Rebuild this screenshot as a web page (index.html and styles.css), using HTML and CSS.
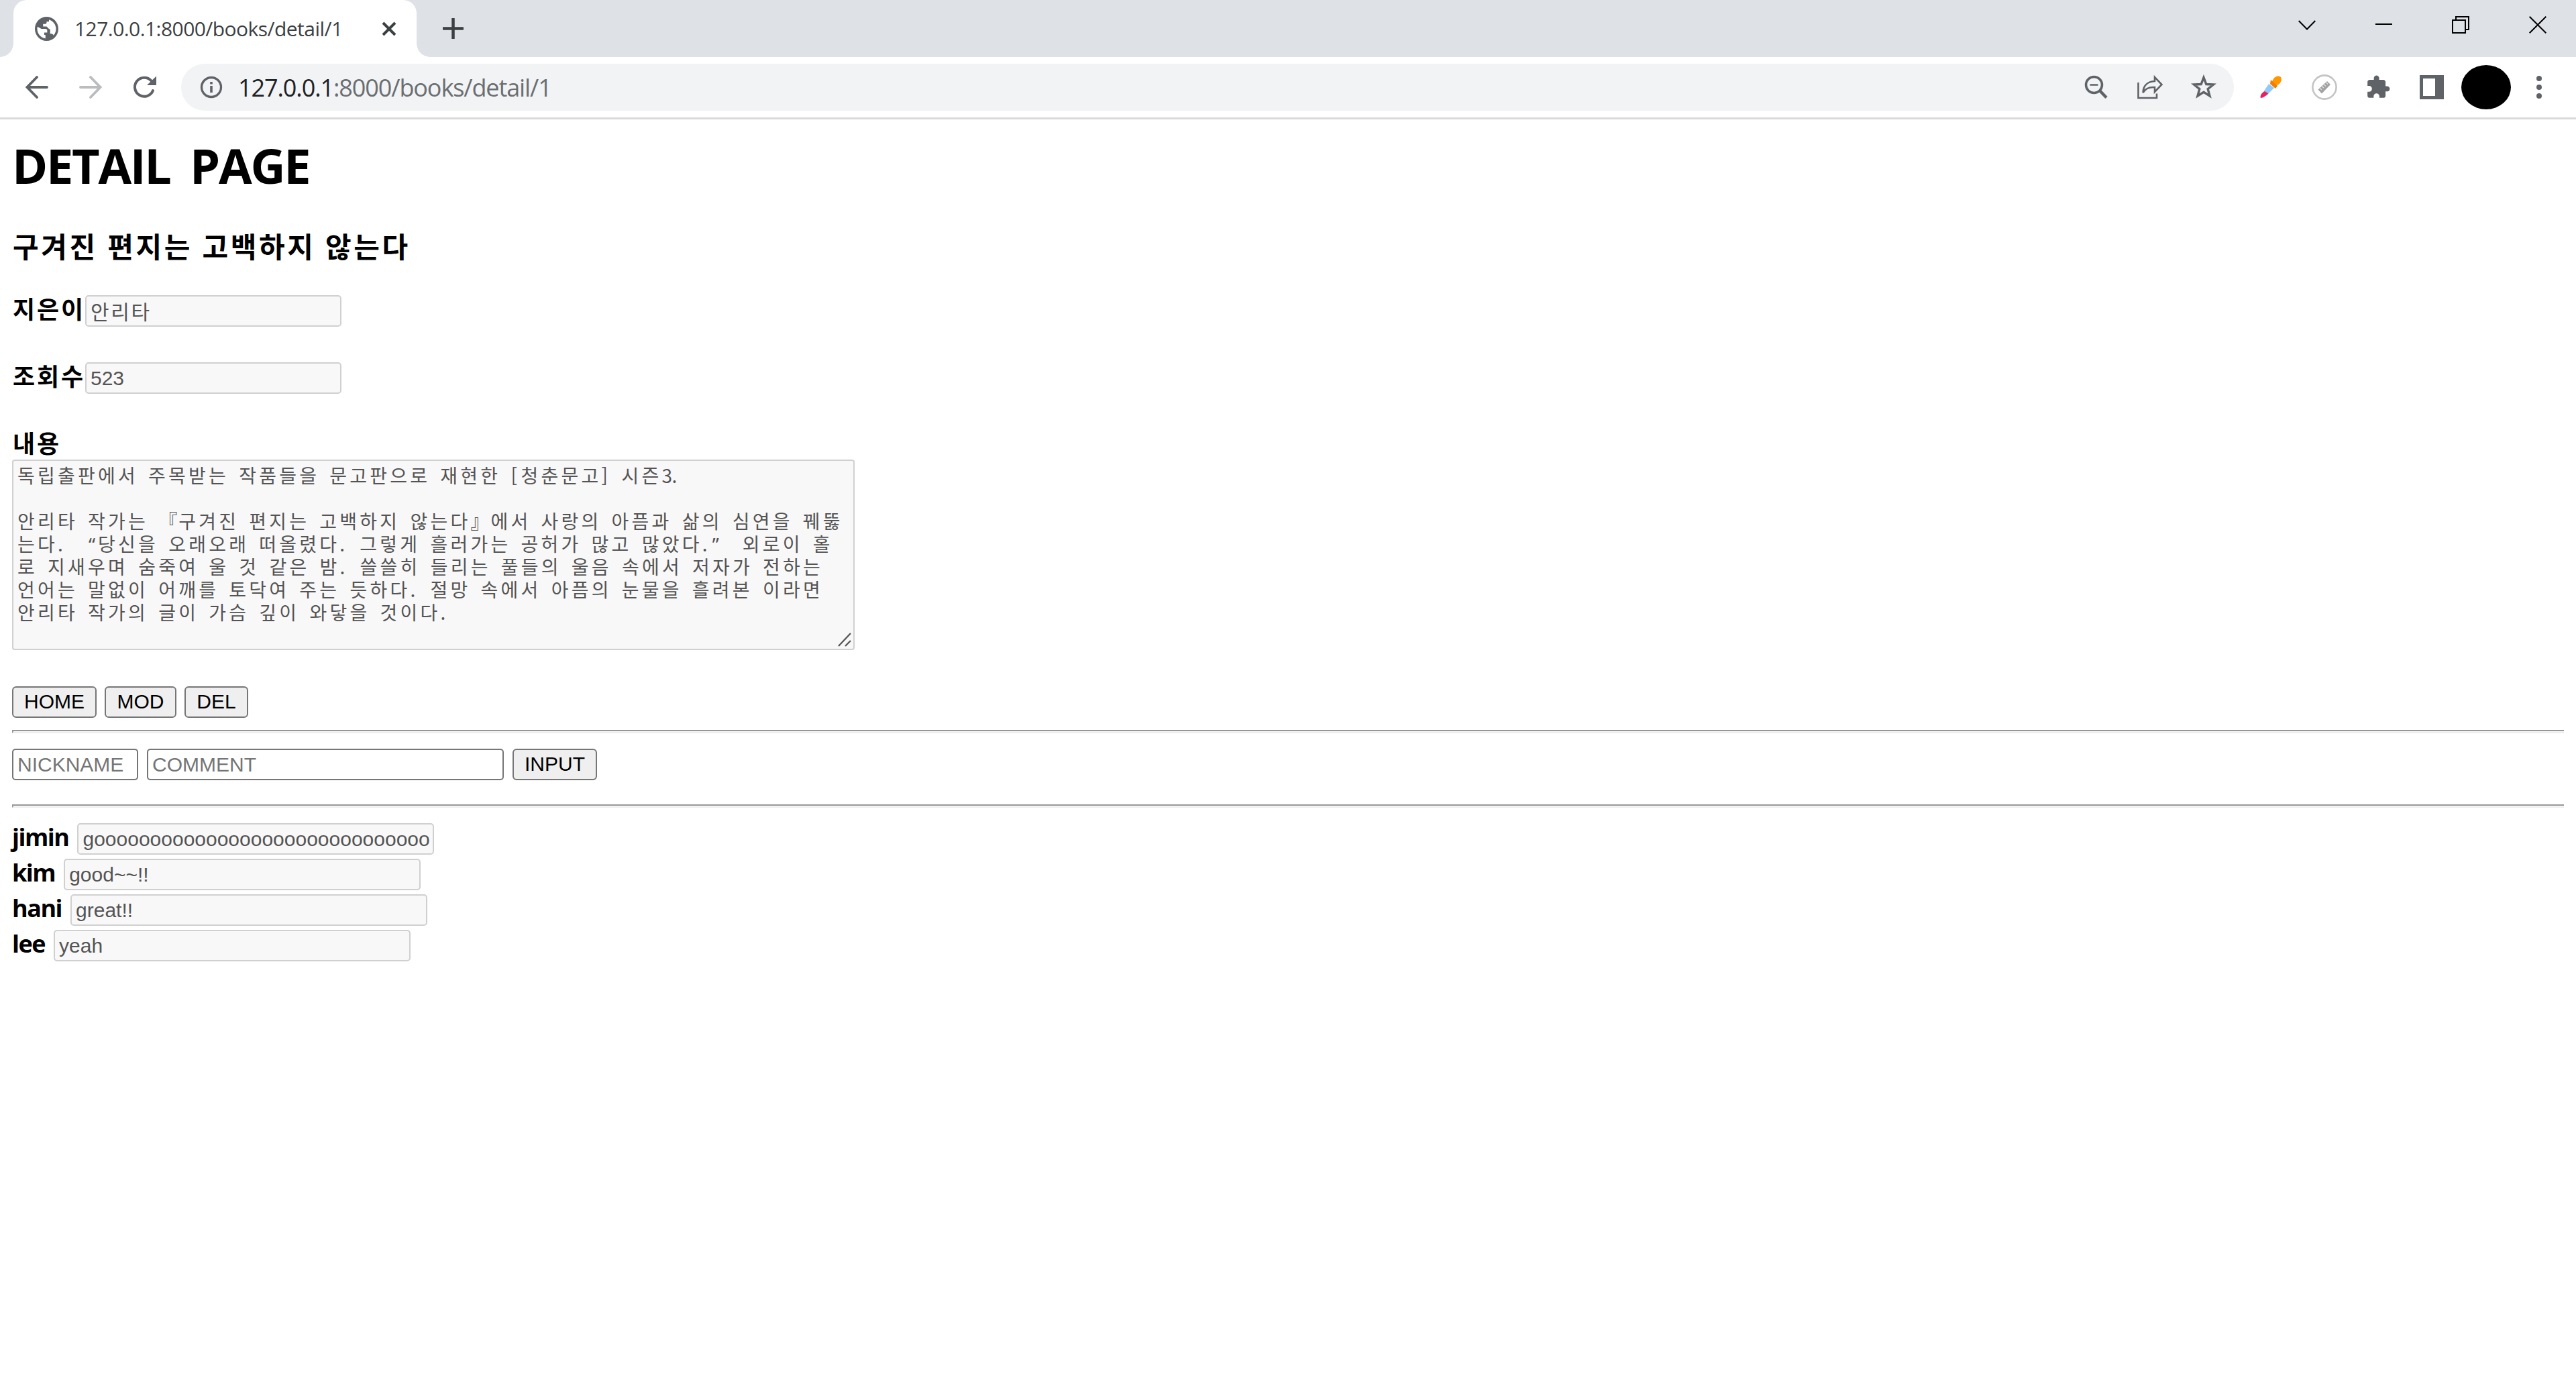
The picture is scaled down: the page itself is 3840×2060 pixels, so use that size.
FILE: index.html
```html
<!DOCTYPE html>
<html lang="ko">
<head>
<meta charset="utf-8">
<title>127.0.0.1:8000/books/detail/1</title>
<link rel="stylesheet" href="styles.css">
</head>
<body>
<header class="browser">
  <div class="tabstrip">
    <div class="tab">
      <svg class="globe" viewBox="2 2 20 20" width="35" height="36" preserveAspectRatio="none"><path fill="#5f6368" d="M12 2C6.480 2 2 6.480 2 12s4.480 10 10 10 10-4.480 10-10S17.520 2 12 2zm-1 17.930C7.050 19.440 4 16.080 4 12c0-.62.08-1.210.21-1.790L7.500 12H11c1 0 1.500.6 1.500 1.500V15H10v2h1v2.930zm6.900-2.540c-.26-.81-1-1.390-1.900-1.390h-1v-3c0-.55-.45-1-1-1L12 10H9V8h1.500c.8 0 1.500-.5 1.500-1.300V6h2V4.400c3.400 1.100 6 4.100 6 7.600 0 2.080-.8 3.970-2.100 5.390z"/></svg>
      <span class="tab-title">127.0.0.1:8000/books/detail/1</span>
      <svg class="tab-close" width="22" height="22" viewBox="0 0 22 22"><path d="M2 2L20 20M20 2L2 20" stroke="#3c4043" stroke-width="4"/></svg>
    </div>
    <svg class="new-tab" width="31" height="31" viewBox="0 0 31 31"><path d="M15.500 1V30M1 15.500H30" stroke="#3c4043" stroke-width="4.500" stroke-linecap="round"/></svg>
    <div class="window-controls">
      <svg width="26" height="26" viewBox="0 0 26 26"><path d="M.7 7L13 19.500 25.300 7" fill="none" stroke="#000" stroke-width="2"/></svg>
      <svg width="26" height="26" viewBox="0 0 26 26"><path d="M0 12H25" stroke="#000" stroke-width="2"/></svg>
      <svg width="26" height="26" viewBox="0 0 26 26"><path d="M1 6H20V25H1zM6 6V1H25V20H20" fill="none" stroke="#000" stroke-width="2"/></svg>
      <svg width="26" height="26" viewBox="0 0 26 26"><path d="M.7.7L25.300 25.300M25.300.7L.7 25.300" stroke="#000" stroke-width="2"/></svg>
    </div>
  </div>
  <div class="toolbar">
    <svg class="back" width="34" height="34" viewBox="0 0 34 34"><path d="M32 17H3M17 2L2.500 17 17 32" fill="none" stroke="#5f6368" stroke-width="3.800" stroke-linecap="round"/></svg>
    <svg class="forward" width="34" height="34" viewBox="0 0 34 34"><path d="M2 17H31M17 2L31.500 17 17 32" fill="none" stroke="#babcbe" stroke-width="3.800" stroke-linecap="round"/></svg>
    <svg class="reload" width="36" height="34" viewBox="0 0 36 34"><path d="M30 22A14 14 0 1 1 27.500 7.500" fill="none" stroke="#5f6368" stroke-width="4" stroke-linecap="round"/><path d="M35 .5V14H21z" fill="#5f6368"/></svg>
    <div class="omnibox">
      <svg class="info" width="34" height="34" viewBox="0 0 34 34"><circle cx="17" cy="17" r="14.500" fill="none" stroke="#5f6368" stroke-width="3.300"/><path d="M15.200 15H18.800V25H15.200zM15.200 9H18.800V12.600H15.200z" fill="#5f6368"/></svg>
      <span class="url"><span class="host">127.0.0.1</span>:8000/books/detail/1</span>
      <div class="omni-actions">
        <svg width="38" height="38" viewBox="0 0 38 38"><g fill="none" stroke="#5f6368"><circle cx="15.500" cy="15.500" r="12" stroke-width="3.500"/><path d="M9.500 15.500H21.500" stroke-width="2.500"/><path d="M24 24L34 34.500" stroke-width="4.500"/></g></svg>
        <svg width="38" height="38" viewBox="0 0 38 38"><g fill="none" stroke="#5f6368" stroke-width="2.600"><path d="M1.500 12V35H29V28.500"/><path d="M8.500 27C9 17 15 10.500 26 10V4L36.500 15 26 26V19C18 18.500 12 21 8.500 27z"/></g></svg>
        <svg width="38" height="38" viewBox="0 0 38 38"><path d="M19 4.500L22.800 14.500 33.500 15 25.200 21.600 28 32 19 26.200 10 32 12.800 21.600 4.500 15 15.200 14.500z" fill="none" stroke="#5f6368" stroke-width="3.400"/></svg>
      </div>
    </div>
    <div class="extensions">
      <svg width="38" height="38" viewBox="0 0 38 38"><path d="M16 14L24 20 12 32 6 29z" fill="#90caf9"/><path d="M10 25L15.500 28.500 9 33.500Q4 36 3.500 34 3.500 30 7 27z" fill="#e91e63"/><path d="M20 12L24 5Q30 0 34 4 36.500 8 32 14L27 17z" fill="#ff9800"/><path d="M19 8L29 17 26 21 18 14z" fill="#f57c00"/></svg>
      <svg width="38" height="38" viewBox="0 0 38 38"><circle cx="19" cy="19" r="17.600" fill="#fff" stroke="#c4c4c4" stroke-width="2.600"/><path d="M9.500 22.500L23 10 28 15 15 28.500z" fill="#a2a2a2"/><path d="M12 20L15 23M15 17.200L18 20M18 14.500L21 17.500M21 11.500L24 14.500" stroke="#e4e4e4" stroke-width="1.200"/></svg>
      <svg width="38" height="38" viewBox="0 0 24 24"><path fill="#5f6368" d="M20.500 11H19V7c0-1.100-.9-2-2-2h-4V3.500C13 2.120 11.880 1 10.500 1S8 2.120 8 3.500V5H4c-1.100 0-1.990.9-1.990 2v3.800H3.500c1.490 0 2.700 1.210 2.700 2.700s-1.210 2.700-2.700 2.700H2V20c0 1.100.9 2 2 2h3.800v-1.500c0-1.490 1.210-2.700 2.700-2.700s2.700 1.210 2.700 2.700V22H17c1.100 0 2-.9 2-2v-4h1.500c1.380 0 2.500-1.120 2.500-2.500S21.880 11 20.500 11z"/></svg>
      <svg width="38" height="38" viewBox="0 0 38 38"><path fill="#5f6368" fill-rule="evenodd" d="M1 1H37V37H1zM6 6V32H24V6z"/></svg>
    </div>
    <div class="avatar"></div>
    <svg class="menu" width="10" height="36" viewBox="0 0 10 36"><g fill="#5f6368"><circle cx="5" cy="5" r="4"/><circle cx="5" cy="18" r="4"/><circle cx="5" cy="31" r="4"/></g></svg>
  </div>
</header>

<main class="page">
  <h1>DETAIL PAGE</h1>
  <h3>구겨진 편지는 고백하지 않는다</h3>
  <div class="row author"><b class="ko">지은이</b><div class="field info-field"><span class="ko-value">안리타</span></div></div>
  <div class="row views"><b class="ko">조회수</b><div class="field info-field">523</div></div>
  <div class="row content-label"><b class="ko">내용</b></div>
  <div class="textarea">
    <p>독립출판에서 주목받는 작품들을 문고판으로 재현한 <i>[</i>청춘문고<i>]</i> 시즌<i>3</i><i>.</i></p>
    <p></p>
    <p>안리타 작가는 <em>『</em>구겨진 편지는 고백하지 않는다<em>』</em>에서 사랑의 아픔과 삶의 심연을 꿰뚫</p>
    <p>는다<i>.</i> <em class="quote open">“</em>당신을 오래오래 떠올렸다<i>.</i> 그렇게 흘러가는 공허가 많고 많았다<i>.</i><em class="quote">”</em> 외로이 홀</p>
    <p>로 지새우며 숨죽여 울 것 같은 밤<i>.</i> 쓸쓸히 들리는 풀들의 울음 속에서 저자가 전하는</p>
    <p>언어는 말없이 어깨를 토닥여 주는 듯하다<i>.</i> 절망 속에서 아픔의 눈물을 흘려본 이라면</p>
    <p>안리타 작가의 글이 가슴 깊이 와닿을 것이다<i>.</i></p>
    <svg class="grip" width="20" height="21" viewBox="0 0 20 21"><path d="M1 20L19 1M11 20L19 12" stroke="#555" stroke-width="2.300"/></svg>
  </div>
  <div class="actions"><button class="w-home">HOME</button><button class="w-mod">MOD</button><button class="w-del">DEL</button></div>
  <div class="rule"></div>
  <div class="comment-form"><div class="field blank nick">NICKNAME</div><div class="field blank comment">COMMENT</div><button class="w-input">INPUT</button></div>
  <div class="rule second"></div>
  <div class="comments">
    <div class="item"><b>jimin</b><div class="field comment">goooooooooooooooooooooooooooooo</div></div>
    <div class="item"><b>kim</b><div class="field comment">good~~!!</div></div>
    <div class="item"><b>hani</b><div class="field comment">great!!</div></div>
    <div class="item"><b>lee</b><div class="field comment">yeah</div></div>
  </div>
</main>
</body>
</html>
```
FILE: styles.css
```css
* { box-sizing: border-box; }
body { margin: 0; background: #fff; color: #000; font-family: "Open Sans", "Noto Sans CJK KR", sans-serif; }
svg { display: block; flex: none; }

.tabstrip { display: flex; height: 85px; background: #dee1e6; padding-left: 20px; }
.tab { position: relative; display: flex; align-items: center; width: 601px; background: #fff; border-radius: 20px 20px 0 0; padding-left: 32px; }
.tab::before, .tab::after { content: ""; position: absolute; bottom: 0; width: 20px; height: 20px; }
.tab::before { left: -20px; background: radial-gradient(circle at 0 0, transparent 19.5px, #fff 20px); }
.tab::after { right: -20px; background: radial-gradient(circle at 100% 0, transparent 19.5px, #fff 20px); }
.tab-title { width: 458px; margin-left: 24px; font-size: 30px; letter-spacing: -0.55px; color: #3c4043; white-space: nowrap; }
.new-tab { margin: 27px 0 0 39px; }
.window-controls { display: flex; gap: 88.7px; margin: 24px 44px 0 auto; }

.toolbar { display: flex; align-items: center; height: 93px; border-bottom: 3px solid #dadada; padding-left: 38px; }
.forward { margin-left: 46px; }
.reload { margin-left: 46px; }
.omnibox { display: flex; align-items: center; width: 3060px; height: 70px; margin-left: 36px; border-radius: 35px; background: #f1f3f4; padding: 0 26px 0 28px; }
.url { margin-left: 23px; font-size: 36px; letter-spacing: -1.1px; color: #6b6e71; white-space: nowrap; }
.host { color: #202124; }
.omni-actions { display: flex; gap: 42px; margin-left: auto; }
.extensions { display: flex; gap: 42px; margin-left: 36px; }
.avatar { width: 74px; height: 66px; margin-left: 25px; border-radius: 50%; background: #000; }
.menu { margin-left: 37px; }

.page { padding: 16px 18px 0; font-size: 36px; }
h1 { margin: 0; height: 121px; font-size: 72px; line-height: 104px; font-weight: 700; letter-spacing: -2.3px; word-spacing: 13px; }
h3 { margin: 0 0 0 1px; height: 125px; font-size: 42px; line-height: 106px; font-weight: 700; letter-spacing: 3.6px; }
.row { display: flex; }
.ko { font-size: 36px; line-height: 43px; letter-spacing: 2.9px; white-space: nowrap; }
.row .ko { width: 109px; padding-left: 1px; }
.author, .views { height: 100px; }
.content-label { height: 45px; }
.field { height: 47px; border: 2px solid #d0d0d0; border-radius: 5px; background: #f8f8f8; padding-left: 6px; font: 30px/43px "Liberation Sans", Arial, sans-serif; color: #545454; white-space: nowrap; overflow: hidden; }
.info-field { width: 382px; }
.ko-value { font-family: "Noto Sans CJK KR", sans-serif; letter-spacing: 2.7px; }

.textarea { position: relative; width: 1256px; height: 284px; border: 2px solid #d0d0d0; border-radius: 4px; background: #f8f8f8; padding: 4px 6px; color: #545454; font-family: "Noto Sans CJK KR", sans-serif; font-size: 28px; letter-spacing: 4.24px; word-spacing: 3px; }
.textarea p { height: 34px; margin: 0; line-height: 34px; white-space: nowrap; }
.textarea i, .textarea em { display: inline-block; width: 15px; letter-spacing: 0; font-style: normal; }
.textarea em { width: 30px; }
.textarea .quote { font-family: "Noto Sans", sans-serif; line-height: 30px; }
.textarea .open { text-align: right; padding-right: 4px; }
.grip { position: absolute; right: 3px; bottom: 3px; }

button { height: 47px; padding: 0 0 2px; border: 2px solid #767676; border-radius: 6px; background: #efefef; color: #000; font: 30px/41px "Liberation Sans", Arial, sans-serif; }
.actions { display: flex; gap: 12px; margin-top: 54px; }
.w-home { width: 126px; }
.w-mod { width: 107px; }
.w-del { width: 95px; }
.rule { height: 5px; margin-top: 18px; border-top: 2px solid #979797; border-bottom: 2px solid #eee; border-left: 2px solid #9a9a9a; }
.comment-form { display: flex; gap: 13px; margin-top: 23px; }
.blank { border-color: #767676; background: #fff; color: #757575; }
.nick { width: 188px; }
.comment { width: 532px; }
.w-input { width: 126px; }
.rule.second { margin-top: 36px; }
.comments { display: flex; flex-direction: column; gap: 6px; margin-top: 23px; }
.item { display: flex; height: 47px; }
.item b { margin-right: 13px; line-height: 41px; letter-spacing: -1.5px; }
```
